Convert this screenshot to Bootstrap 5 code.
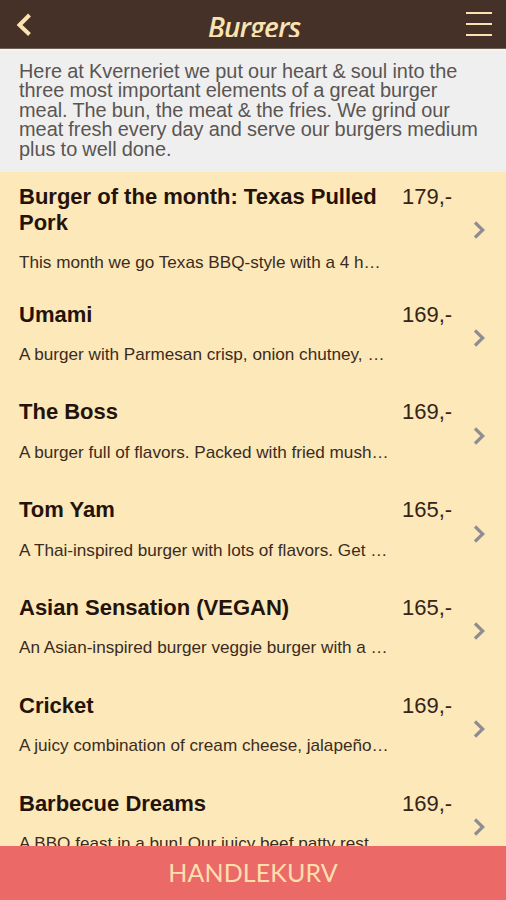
<!DOCTYPE html>
<html lang="en">
<head>
<meta charset="utf-8">
<meta name="viewport" content="width=device-width, initial-scale=1">
<title>Burgers</title>
<link href="https://cdn.jsdelivr.net/npm/bootstrap@5.3.0/dist/css/bootstrap.min.css" rel="stylesheet">
<style>
  body { font-family: "Liberation Sans", Arial, sans-serif; background: #fce8b8; color: #24150c; height: 900px; }
  .topbar { height: 49px; background: #463128; color: #fae3b1; border-bottom: 1px solid #6d6057; padding: 0 14px 0 16px; }
  .brand-title { font: italic 600 28px/32px "Open Sans", sans-serif; height: 26px; letter-spacing: -.9px; overflow: hidden; padding: 0 3px; }
  .intro { height: 123px; background: #efefef; border-top: 2px solid #f7f4ec; color: #5a5553; font-size: 19.9px; line-height: 19.6px; word-spacing: -.4px; padding: 10.5px 19px 0; }
  .dish { height: 97.8px; padding: 13px 19px 0; color: inherit; }
  .dish-tall { height: 116.6px; padding-top: 12px; }
  .dish-name { font-size: 22px; line-height: 26px; font-weight: 700; color: #24130b; }
  .dish-text { font-size: 17.15px; line-height: 24px; margin-top: 14.4px; color: #3b2b1f; }
  .dish-tall .dish-text { margin-top: 14px; }
  .dish-main { width: 383px; }
  .price { font-size: 22px; line-height: 26px; color: #34241a; }
  .chev { margin: -12px 0 0 21px; }
  .cart { height: 54px; background: #eb6967; color: #fddfae; font: 400 25px/53px Lato, sans-serif; letter-spacing: .1px; }
</style>
</head>
<body class="d-flex flex-column overflow-hidden">
  <header class="topbar d-flex align-items-center justify-content-between flex-shrink-0">
    <svg width="26" height="24" viewBox="0 0 26 24" fill="none" stroke="currentColor" stroke-width="4"><path d="M13.5 3 3.5 13l10 9.5"/></svg>
    <h1 class="brand-title mb-0">Burgers</h1>
    <svg width="26" height="28" viewBox="0 0 26 28" fill="none" stroke="currentColor" stroke-width="2.2"><path d="M0 3h26M0 14h26M0 25h26"/></svg>
  </header>
  <p class="intro mb-0 flex-shrink-0">Here at Kverneriet we put our heart &amp; soul into the<br>three most important elements of a great burger<br>meal. The bun, the meat &amp; the fries. We grind our<br>meat fresh every day and serve our burgers medium<br>plus to well done.</p>
  <main class="flex-grow-1 overflow-hidden">
    <a class="dish dish-tall d-flex text-decoration-none" href="#">
      <div class="dish-main flex-shrink-0"><div class="dish-name">Burger of the month: Texas Pulled<br>Pork</div><div class="dish-text text-nowrap">This month we go Texas BBQ-style with a 4 h…</div></div>
      <span class="price">179,-</span>
      <svg class="chev align-self-center flex-shrink-0" width="13" height="18" viewBox="0 0 13 18" fill="none" stroke="#8e8e92" stroke-width="3.2"><path d="M2 1.5 9.7 9 2 16.5"/></svg>
    </a>
    <a class="dish d-flex text-decoration-none" href="#">
      <div class="dish-main flex-shrink-0"><div class="dish-name">Umami</div><div class="dish-text text-nowrap">A burger with Parmesan crisp, onion chutney, …</div></div>
      <span class="price">169,-</span>
      <svg class="chev align-self-center flex-shrink-0" width="13" height="18" viewBox="0 0 13 18" fill="none" stroke="#8e8e92" stroke-width="3.2"><path d="M2 1.5 9.7 9 2 16.5"/></svg>
    </a>
    <a class="dish d-flex text-decoration-none" href="#">
      <div class="dish-main flex-shrink-0"><div class="dish-name">The Boss</div><div class="dish-text text-nowrap">A burger full of flavors. Packed with fried mush…</div></div>
      <span class="price">169,-</span>
      <svg class="chev align-self-center flex-shrink-0" width="13" height="18" viewBox="0 0 13 18" fill="none" stroke="#8e8e92" stroke-width="3.2"><path d="M2 1.5 9.7 9 2 16.5"/></svg>
    </a>
    <a class="dish d-flex text-decoration-none" href="#">
      <div class="dish-main flex-shrink-0"><div class="dish-name">Tom Yam</div><div class="dish-text text-nowrap">A Thai-inspired burger with lots of flavors. Get …</div></div>
      <span class="price">165,-</span>
      <svg class="chev align-self-center flex-shrink-0" width="13" height="18" viewBox="0 0 13 18" fill="none" stroke="#8e8e92" stroke-width="3.2"><path d="M2 1.5 9.7 9 2 16.5"/></svg>
    </a>
    <a class="dish d-flex text-decoration-none" href="#">
      <div class="dish-main flex-shrink-0"><div class="dish-name">Asian Sensation (VEGAN)</div><div class="dish-text text-nowrap">An Asian-inspired burger veggie burger with a …</div></div>
      <span class="price">165,-</span>
      <svg class="chev align-self-center flex-shrink-0" width="13" height="18" viewBox="0 0 13 18" fill="none" stroke="#8e8e92" stroke-width="3.2"><path d="M2 1.5 9.7 9 2 16.5"/></svg>
    </a>
    <a class="dish d-flex text-decoration-none" href="#">
      <div class="dish-main flex-shrink-0"><div class="dish-name">Cricket</div><div class="dish-text text-nowrap">A juicy combination of cream cheese, jalapeño…</div></div>
      <span class="price">169,-</span>
      <svg class="chev align-self-center flex-shrink-0" width="13" height="18" viewBox="0 0 13 18" fill="none" stroke="#8e8e92" stroke-width="3.2"><path d="M2 1.5 9.7 9 2 16.5"/></svg>
    </a>
    <a class="dish d-flex text-decoration-none" href="#">
      <div class="dish-main flex-shrink-0"><div class="dish-name">Barbecue Dreams</div><div class="dish-text text-nowrap">A BBQ feast in a bun! Our juicy beef patty rest</div></div>
      <span class="price">169,-</span>
      <svg class="chev align-self-center flex-shrink-0" width="13" height="18" viewBox="0 0 13 18" fill="none" stroke="#8e8e92" stroke-width="3.2"><path d="M2 1.5 9.7 9 2 16.5"/></svg>
    </a>
  </main>
  <a class="cart d-block text-center text-decoration-none flex-shrink-0" href="#">HANDLEKURV</a>
</body>
</html>
